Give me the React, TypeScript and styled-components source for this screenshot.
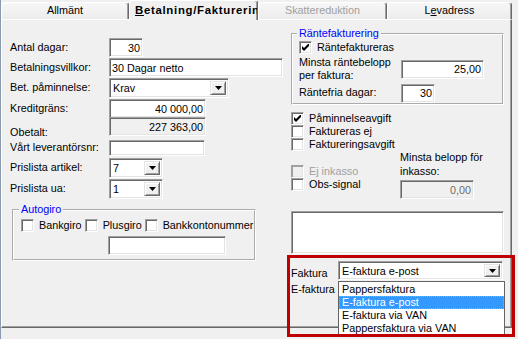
import React from 'react'
import styled, { createGlobalStyle, css } from 'styled-components'

const GlobalStyle = createGlobalStyle`
  html, body {
    margin: 0;
    padding: 0;
    background: #f0f0f0;
  }
  body {
    font-family: "Liberation Sans", Arial, sans-serif;
    font-size: 10.8px;
    color: #000;
  }
`

const sunken = css`
  border: 1px solid;
  border-color: #a0a0a0 #fff #fff #a0a0a0;
  box-shadow: inset 1px 1px 0 #696969, inset -1px -1px 0 #e3e3e3;
`

const raised = css`
  border: 1px solid;
  border-color: #e3e3e3 #696969 #696969 #e3e3e3;
  box-shadow: inset 1px 1px 0 #fff, inset -1px -1px 0 #a0a0a0;
`

const Check = ({ checked, disabled }: { checked?: boolean; disabled?: boolean }) => (
  <CheckBox $disabled={disabled}>
    {checked && (
      <svg width="7" height="7" viewBox="0 0 7 7">
        <polygon points="0,2 2,4 7,-1 7,2 2,7 0,5" fill="#000" />
      </svg>
    )}
  </CheckBox>
)

const CheckItem = ({ label, checked, disabled }: { label: string; checked?: boolean; disabled?: boolean }) => (
  <CheckRow $disabled={disabled}>
    <Check checked={checked} disabled={disabled} />
    <span>{label}</span>
  </CheckRow>
)

const Arrow = () => (
  <svg width="7" height="4" viewBox="0 0 7 4">
    <path d="M0 0h7L3.5 4z" fill="#000" />
  </svg>
)

const Combo = ({ value, w, h = 20 }: { value: string; w: number; h?: number }) => (
  <ComboBox $w={w} $h={h}>
    <ComboText>{value}</ComboText>
    <DropButton>
      <Arrow />
    </DropButton>
  </ComboBox>
)

const App = () => {
  return (
    <Window>
      <GlobalStyle />
      <TabStrip>
        <Tab $w={128}>Allmänt</Tab>
        <Tab $w={129} $active>
          <u>B</u>etalning/Fakturering
        </Tab>
        <Tab $w={129} $disabled>Skattereduktion</Tab>
        <Tab $w={125}>
          L<u>e</u>vadress
        </Tab>
      </TabStrip>

      <Panel>
        <LeftCol>
          <Row>
            <Label>Antal dagar:</Label>
            <TextBox $w={34} $align="right">30</TextBox>
          </Row>
          <Row $mt={1}>
            <Label>Betalningsvillkor:</Label>
            <TextBox $w={174}>30 Dagar netto</TextBox>
          </Row>
          <Row $mt={1}>
            <Label>Bet. påminnelse:</Label>
            <Combo value="Krav" w={120} />
          </Row>
          <Row $mt={1}>
            <Label>Kreditgräns:</Label>
            <TextBox $w={97} $align="right">40 000,00</TextBox>
          </Row>
          <Row $mt={-1}>
            <Label $shift={6}>Obetalt:</Label>
            <TextBox $w={97} $align="right" $disabled>227 363,00</TextBox>
          </Row>
          <Row $mt={4}>
            <Label>Vårt leverantörsnr:</Label>
            <TextBox $w={96} $h={16} />
          </Row>
          <Row $mt={2}>
            <Label>Prislista artikel:</Label>
            <Combo value="7" w={54} />
          </Row>
          <Row $mt={1}>
            <Label>Prislista ua:</Label>
            <Combo value="1" w={54} />
          </Row>

          <Group $w={244} $ml={2} $mt={4} $pad="3px 7px 4px">
            <Legend>Autogiro</Legend>
            <InlineChecks>
              <CheckItem label="Bankgiro" />
              <CheckItem label="Plusgiro" />
              <CheckItem label="Bankkontonummer" />
            </InlineChecks>
            <Indented>
              <TextBox $w={118} />
            </Indented>
          </Group>
        </LeftCol>

        <RightCol>
          <Group $w={213} $pad="1px 6px 0">
            <Legend>Räntefakturering</Legend>
            <CheckItem label="Räntefaktureras" checked />
            <FormGrid>
              <Label>
                Minsta räntebelopp
                <br />
                per faktura:
              </Label>
              <TextBox $w={83} $align="right">25,00</TextBox>
              <Label>Räntefria dagar:</Label>
              <TextBox $w={34} $align="right">30</TextBox>
            </FormGrid>
          </Group>

          <Checks>
            <CheckItem label="Påminnelseavgift" checked />
            <CheckItem label="Faktureras ej" />
            <CheckItem label="Faktureringsavgift" />
            <InkassoRow>
              <InkassoChecks>
                <CheckItem label="Ej inkasso" disabled />
                <CheckItem label="Obs-signal" />
              </InkassoChecks>
              <div>
                <Label>
                  Minsta belopp för
                  <br />
                  inkasso:
                </Label>
                <TextBox $w={74} $align="right" $disabled $dim>
                  0,00
                </TextBox>
              </div>
            </InkassoRow>
          </Checks>

          <Memo>
            <TextBox $w={213} $h={43} />
          </Memo>

          <FakturaSection>
            <Highlight />
            <FakturaRow>
              <Label $shift={3}>Faktura</Label>
              <ComboWrap>
                <Combo value="E-faktura e-post" w={165} h={19} />
                <DropList>
                  <DropItem>Pappersfaktura</DropItem>
                  <DropItem $selected>E-faktura e-post</DropItem>
                  <DropItem>E-faktura via VAN</DropItem>
                  <DropItem>Pappersfaktura via VAN</DropItem>
                </DropList>
              </ComboWrap>
            </FakturaRow>
            <FakturaRow $mt={3}>
              <Label>E-faktura</Label>
            </FakturaRow>
          </FakturaSection>
        </RightCol>
      </Panel>
    </Window>
  )
}

export default App

const Window = styled.div`
  width: 518px;
  height: 339px;
  box-sizing: border-box;
  border-left: 1px solid #8a9bb0;
  background: #f0f0f0;
  overflow: hidden;
`

const TabStrip = styled.div`
  display: flex;
  align-items: flex-end;
  height: 19px;
`

const Tab = styled.div<{ $w: number; $active?: boolean; $disabled?: boolean }>`
  box-sizing: border-box;
  width: ${p => p.$w}px;
  height: ${p => (p.$active ? 20 : 17)}px;
  margin-bottom: ${p => (p.$active ? -1 : 0)}px;
  position: relative;
  z-index: ${p => (p.$active ? 1 : 0)};
  border-top: 1px solid #fff;
  border-left: 1px solid #fff;
  border-right: 1px solid #696969;
  border-radius: 3px 3px 0 0;
  box-shadow: inset -1px 0 0 #a0a0a0;
  background: ${p => (p.$active ? '#f0f0f0' : 'linear-gradient(#f7f7f7, #ececec)')};
  color: ${p => (p.$disabled ? '#a0a0a0' : '#000')};
  font-weight: ${p => (p.$active ? 'bold' : 'normal')};
  font-size: ${p => (p.$active ? '11.4px' : 'inherit')};
  letter-spacing: ${p => (p.$active ? '0.7px' : '0')};
  text-align: ${p => (p.$active ? 'left' : 'center')};
  padding: ${p => (p.$active ? '3px 0 0 5px' : '1px 0 0')};
  line-height: 13px;
  white-space: nowrap;
  overflow: hidden;
`

const Panel = styled.div`
  box-sizing: border-box;
  width: 511px;
  height: 309px;
  border-top: 1px solid #fff;
  border-left: 1px solid #fff;
  border-right: 1px solid #696969;
  border-bottom: 1px solid #696969;
  box-shadow: inset -1px -1px 0 #a0a0a0;
  display: grid;
  grid-template-columns: 273px 213px;
  column-gap: 8px;
  align-items: start;
  padding: 7px 0 0 8px;
`

const LeftCol = styled.div`
  display: flex;
  flex-direction: column;
  padding-top: 11px;
`

const RightCol = styled.div`
  display: flex;
  flex-direction: column;
`

const Row = styled.div<{ $mt?: number }>`
  display: grid;
  grid-template-columns: 99px auto;
  align-items: center;
  margin-top: ${p => p.$mt ?? 0}px;
`

const Label = styled.div<{ $shift?: number }>`
  line-height: 13.5px;
  white-space: nowrap;
  margin-top: ${p => p.$shift ?? 0}px;
  margin-bottom: ${p => -(p.$shift ?? 0)}px;
`

const TextBox = styled.div<{ $w: number; $h?: number; $align?: 'left' | 'right'; $disabled?: boolean; $dim?: boolean }>`
  box-sizing: border-box;
  width: ${p => p.$w}px;
  height: ${p => p.$h ?? 19}px;
  ${sunken};
  background: ${p => (p.$disabled ? '#f0f0f0' : '#fff')};
  color: ${p => (p.$dim ? '#6d6d6d' : '#000')};
  display: flex;
  align-items: center;
  justify-content: ${p => (p.$align === 'right' ? 'flex-end' : 'flex-start')};
  padding: 0 2px;
  white-space: nowrap;
  overflow: hidden;
`

const ComboBox = styled.div<{ $w: number; $h: number }>`
  box-sizing: border-box;
  width: ${p => p.$w}px;
  height: ${p => p.$h}px;
  ${sunken};
  background: #fff;
  display: flex;
  align-items: stretch;
  padding: 2px;
`

const ComboText = styled.div`
  flex: 1;
  display: flex;
  align-items: center;
  padding-left: 1px;
  white-space: nowrap;
  overflow: hidden;
`

const DropButton = styled.div`
  box-sizing: border-box;
  width: 16px;
  ${raised};
  background: #f0f0f0;
  display: flex;
  align-items: center;
  justify-content: center;
`

const CheckBox = styled.div<{ $disabled?: boolean }>`
  box-sizing: border-box;
  width: 13px;
  height: 13px;
  flex: none;
  ${sunken};
  ${p => p.$disabled && 'box-shadow: inset 1px 1px 0 #a0a0a0, inset -1px -1px 0 #e3e3e3;'}
  background: ${p => (p.$disabled ? '#f0f0f0' : '#fff')};
  display: flex;
  align-items: center;
  justify-content: center;
`

const CheckRow = styled.div<{ $disabled?: boolean }>`
  display: flex;
  align-items: center;
  gap: 5px;
  height: 13px;
  line-height: 13px;
  white-space: nowrap;
  color: ${p => (p.$disabled ? '#a0a0a0' : '#000')};
`

const Group = styled.fieldset<{ $w: number; $ml?: number; $mt?: number; $pad: string }>`
  box-sizing: border-box;
  width: ${p => p.$w}px;
  margin: ${p => p.$mt ?? 0}px 0 0 ${p => p.$ml ?? 0}px;
  padding: ${p => p.$pad};
  border: 2px groove #fff;
  min-inline-size: 0;
`

const Legend = styled.legend`
  color: #0000ff;
  padding: 0 2px;
  margin-left: -2px;
  line-height: 13px;
`

const InlineChecks = styled.div`
  display: flex;
  gap: 3px;
`

const Indented = styled.div`
  margin: 4px 0 0 87px;
`

const FormGrid = styled.div`
  display: grid;
  grid-template-columns: 102px auto;
  grid-template-rows: 28px 20px;
  align-items: center;
  margin-top: 1px;
`

const Checks = styled.div`
  display: flex;
  flex-direction: column;
  margin-top: 7px;
`

const InkassoRow = styled.div`
  display: grid;
  grid-template-columns: 109px auto;
  align-items: start;

  ${TextBox} {
    margin-top: 2px;
  }
`

const InkassoChecks = styled.div`
  display: flex;
  flex-direction: column;
  padding-top: 14px;
`

const Memo = styled.div`
  margin-top: 12px;
`

const FakturaSection = styled.div`
  position: relative;
  margin-top: 7px;
`

const FakturaRow = styled.div<{ $mt?: number }>`
  display: grid;
  grid-template-columns: 47px auto;
  align-items: center;
  margin-top: ${p => p.$mt ?? 0}px;
`

const ComboWrap = styled.div`
  position: relative;
`

const DropList = styled.div`
  position: absolute;
  top: 20px;
  left: 0;
  width: 167px;
  box-sizing: border-box;
  border: 1px solid #646464;
  background: #fff;
  padding-top: 1px;
  z-index: 2;
`

const DropItem = styled.div<{ $selected?: boolean }>`
  box-sizing: border-box;
  height: 13px;
  line-height: 11px;
  padding: 0 2px;
  white-space: nowrap;
  border: 1px ${p => (p.$selected ? 'dotted #e8a040' : 'solid transparent')};
  background: ${p => (p.$selected ? '#3399ff' : 'transparent')};
  color: ${p => (p.$selected ? '#fff' : '#000')};
`

const Highlight = styled.div`
  position: absolute;
  top: -6px;
  left: -4px;
  width: 228px;
  height: 82px;
  box-sizing: border-box;
  border: 3px solid #c00000;
  pointer-events: none;
  z-index: 3;
`
